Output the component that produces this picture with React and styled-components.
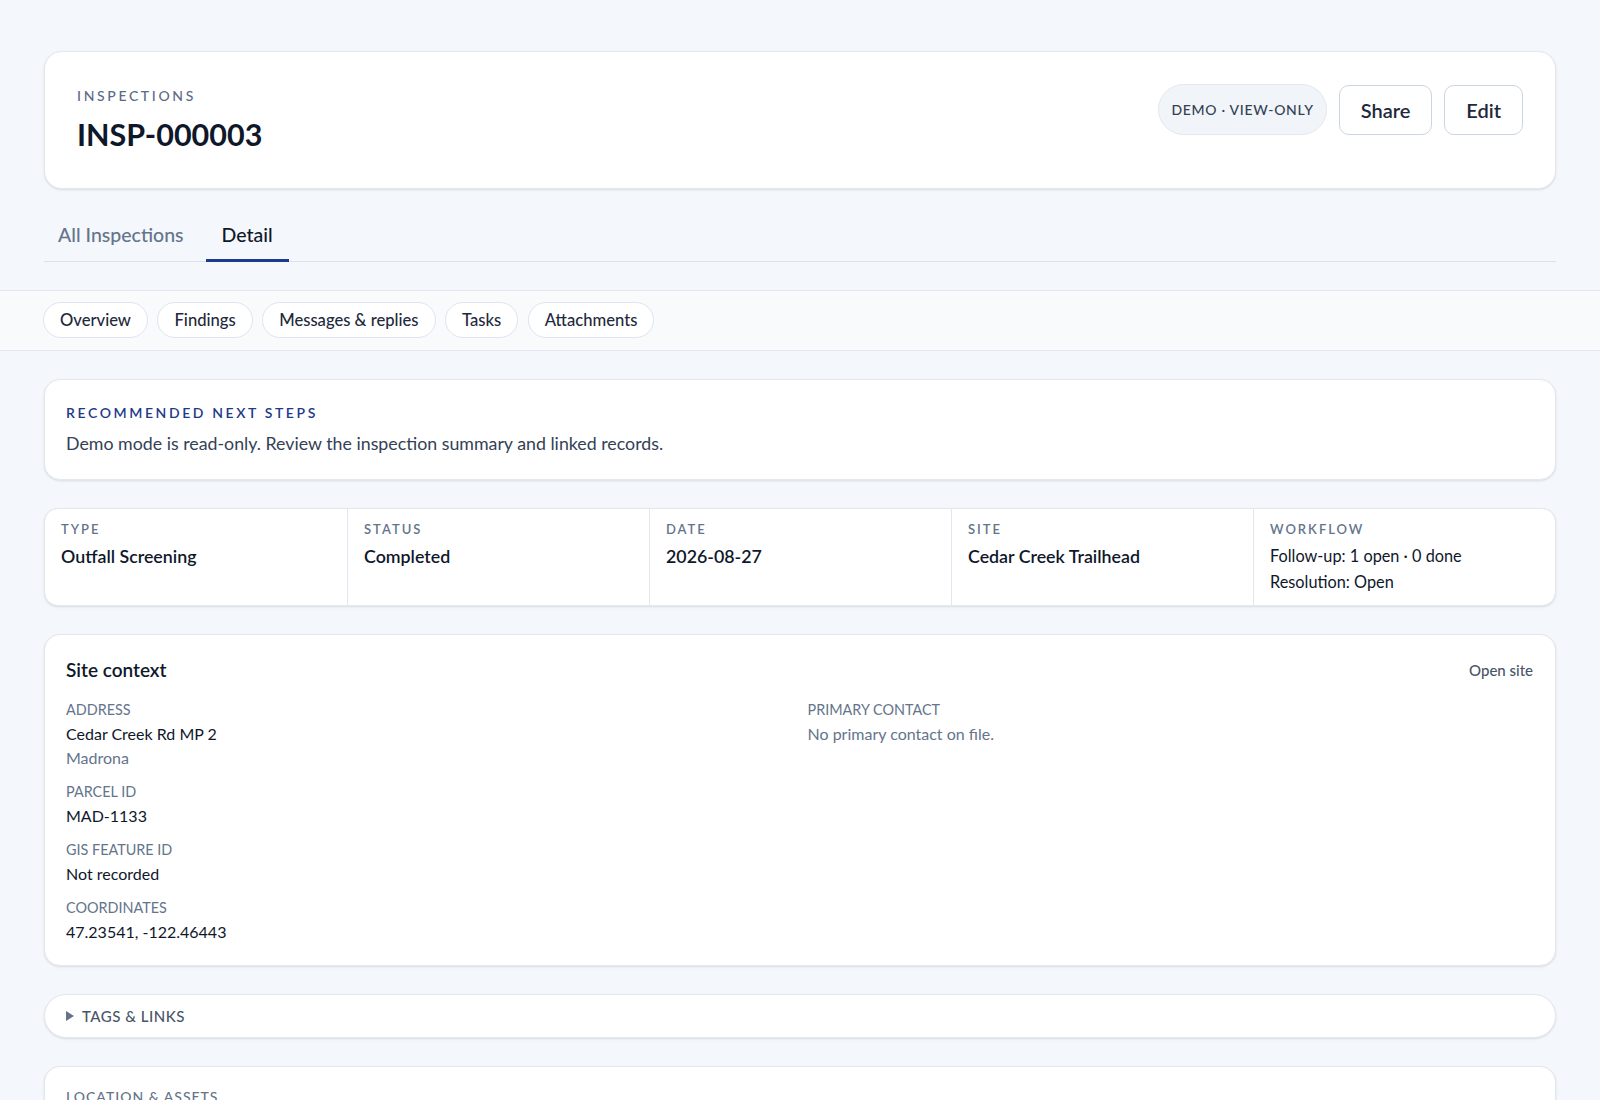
import React from "react";
import styled, { createGlobalStyle } from "styled-components";

const FONT = `"Segoe UI", Lato, "Noto Sans", sans-serif`;

const Global = createGlobalStyle`
  * { box-sizing: border-box; }
  body {
    margin: 0;
    background: #f4f7fb;
    font-family: ${FONT};
    color: #0f172a;
  }
`;

const Page = styled.div`
  min-height: 1100px;
  padding-top: 51px;
`;

const Section = styled.div`
  padding: 0 44px;
`;

const Card = styled.div`
  background: #ffffff;
  border: 1px solid #e3e8ef;
  border-radius: ${(p) => p.$radius || 16}px;
  box-shadow: 0 1px 3px rgba(15, 23, 42, 0.08), 0 1px 2px rgba(15, 23, 42, 0.04);
`;

const HeaderCard = styled(Card)`
  display: flex;
  justify-content: space-between;
  align-items: flex-start;
  padding: 32px 32px 34px;
`;

const TitleBlock = styled.div`
  padding-top: 2px;
`;

const Eyebrow = styled.div`
  font-size: 14px;
  line-height: 20px;
  letter-spacing: 2.65px;
  font-weight: 500;
  color: #5b6b84;
  text-transform: uppercase;
`;

const Title = styled.h1`
  margin: 8px 0 0;
  font-size: 30.5px;
  line-height: 40px;
  font-weight: 700;
  color: #0f172a;
`;

const Actions = styled.div`
  display: flex;
  gap: 12px;
  align-items: center;
`;

const DemoPill = styled.div`
  height: 51px;
  padding: 0 12px;
  display: flex;
  align-items: center;
  border-radius: 999px;
  background: #f1f5f9;
  border: 1px solid #e2e8f0;
  font-size: 14px;
  letter-spacing: 0.7px;
  font-weight: 500;
  color: #334155;
`;

const Button = styled.button`
  height: 50px;
  padding: 0 21px;
  border-radius: 10px;
  border: 1px solid #cbd5e1;
  background: #ffffff;
  font-family: ${FONT};
  font-size: 20px;
  font-weight: 600;
  color: #1e293b;
  cursor: pointer;
`;

const TabBar = styled.div`
  margin-top: 19px;
  display: flex;
  gap: 6px;
  border-bottom: 1px solid #dbe2ea;
`;

const Tab = styled.div`
  padding: 14px 16px 11px;
  font-size: 19.5px;
  line-height: 26px;
  font-weight: 500;
  color: ${(p) => (p.$active ? "#0f172a" : "#64748b")};
  margin-bottom: -1px;
  border-bottom: 3px solid ${(p) => (p.$active ? "#1e3a8a" : "transparent")};
  &:first-child {
    margin-left: -2px;
  }
`;

const SubNav = styled.nav`
  margin-top: 28px;
  background: #f8fafc;
  border-top: 1px solid #e2e8f0;
  border-bottom: 1px solid #e2e8f0;
  padding: 11px 44px 12px 43px;
  display: flex;
  gap: 9.5px;
`;

const Pill = styled.div`
  height: 36px;
  padding: 0 16px;
  display: flex;
  align-items: center;
  border-radius: 999px;
  background: #ffffff;
  border: 1px solid #dfe5ec;
  font-size: 16.6px;
  font-weight: 500;
  color: #1e293b;
`;

const Content = styled.div`
  padding: 28px 44px 0;
  display: flex;
  flex-direction: column;
  gap: 28px;
`;

const CalloutCard = styled(Card)`
  padding: 24px 21px;
`;

const CalloutLabel = styled.div`
  font-size: 14px;
  line-height: 18px;
  letter-spacing: 2.6px;
  font-weight: 600;
  color: #1e3a8a;
  text-transform: uppercase;
`;

const CalloutText = styled.div`
  margin-top: 9px;
  font-size: 17.8px;
  line-height: 24px;
  color: #334155;
`;

const StatsCard = styled(Card)`
  display: grid;
  grid-template-columns: repeat(5, 1fr);
  overflow: hidden;
`;

const StatCell = styled.div`
  padding: 11px 16px 10px;
  border-left: ${(p) => (p.$first ? "none" : "1px solid #e2e8f0")};
`;

const StatLabel = styled.div`
  font-size: 13px;
  line-height: 18px;
  letter-spacing: 2px;
  font-weight: 600;
  color: #64748b;
  text-transform: uppercase;
`;

const StatValue = styled.div`
  margin-top: ${(p) => (p.$tight ? 0 : 5)}px;
  line-height: 26px;
  font-weight: ${(p) => (p.$regular ? 400 : 600)};
  font-size: ${(p) => (p.$regular ? 16.3 : 17.8)}px;
  color: #0f172a;
`;

const SiteCard = styled(Card)`
  padding: 22px 22px 21px 21px;
`;

const CardHead = styled.div`
  display: flex;
  justify-content: space-between;
  align-items: center;
`;

const CardTitle = styled.h2`
  margin: 0;
  font-size: 19px;
  line-height: 26px;
  font-weight: 600;
  color: #0f172a;
`;

const LinkText = styled.a`
  font-size: 15px;
  font-weight: 500;
  color: #475569;
  text-decoration: none;
`;

const FieldGrid = styled.div`
  margin-top: 15px;
  display: grid;
  grid-template-columns: 1fr 1fr;
  column-gap: 16px;
`;

const FieldColumn = styled.div`
  display: flex;
  flex-direction: column;
  gap: 10px;
`;

const Field = styled.div`
  display: flex;
  flex-direction: column;
`;

const FieldLabel = styled.div`
  font-size: 14.4px;
  line-height: 24px;
  color: #64748b;
  text-transform: uppercase;
`;

const FieldValue = styled.div`
  font-size: 16px;
  line-height: 24px;
  color: ${(p) => (p.$muted ? "#64748b" : "#0f172a")};
`;

const Disclosure = styled(Card)`
  border-radius: 22px;
  height: 44px;
  padding: 0 21px;
  display: flex;
  align-items: center;
  gap: 8px;
  font-size: 15px;
  font-weight: 500;
  letter-spacing: 0.5px;
  color: #475569;
  text-transform: uppercase;
`;

const Caret = styled.span`
  width: 0;
  height: 0;
  border-top: 5px solid transparent;
  border-bottom: 5px solid transparent;
  border-left: 8px solid #64748b;
`;

const SectionCard = styled(Card)`
  padding: 20px 21px;
  min-height: 120px;
`;

const SectionLabel = styled.div`
  font-size: 14px;
  line-height: 20px;
  letter-spacing: 1px;
  font-weight: 500;
  color: #64748b;
  text-transform: uppercase;
`;

const stats = [
  { label: "Type", value: "Outfall Screening" },
  { label: "Status", value: "Completed" },
  { label: "Date", value: "2026-08-27" },
  { label: "Site", value: "Cedar Creek Trailhead" },
];

export default function App() {
  return (
    <>
      <Global />
      <Page>
        <Section>
          <HeaderCard $radius={18}>
            <TitleBlock>
              <Eyebrow>Inspections</Eyebrow>
              <Title>INSP-000003</Title>
            </TitleBlock>
            <Actions>
              <DemoPill>DEMO · VIEW-ONLY</DemoPill>
              <Button>Share</Button>
              <Button>Edit</Button>
            </Actions>
          </HeaderCard>
          <TabBar>
            <Tab>All Inspections</Tab>
            <Tab $active>Detail</Tab>
          </TabBar>
        </Section>
        <SubNav>
          <Pill>Overview</Pill>
          <Pill>Findings</Pill>
          <Pill>Messages &amp; replies</Pill>
          <Pill>Tasks</Pill>
          <Pill>Attachments</Pill>
        </SubNav>
        <Content>
          <CalloutCard>
            <CalloutLabel>Recommended next steps</CalloutLabel>
            <CalloutText>
              Demo mode is read-only. Review the inspection summary and linked records.
            </CalloutText>
          </CalloutCard>

          <StatsCard $radius={14}>
            {stats.map((s, i) => (
              <StatCell key={s.label} $first={i === 0}>
                <StatLabel>{s.label}</StatLabel>
                <StatValue>{s.value}</StatValue>
              </StatCell>
            ))}
            <StatCell>
              <StatLabel>Workflow</StatLabel>
              <StatValue $regular>Follow-up: 1 open · 0 done</StatValue>
              <StatValue $regular $tight>Resolution: Open</StatValue>
            </StatCell>
          </StatsCard>

          <SiteCard>
            <CardHead>
              <CardTitle>Site context</CardTitle>
              <LinkText href="#">Open site</LinkText>
            </CardHead>
            <FieldGrid>
              <FieldColumn>
                <Field>
                  <FieldLabel>Address</FieldLabel>
                  <FieldValue>Cedar Creek Rd MP 2</FieldValue>
                  <FieldValue $muted>Madrona</FieldValue>
                </Field>
                <Field>
                  <FieldLabel>Parcel ID</FieldLabel>
                  <FieldValue>MAD-1133</FieldValue>
                </Field>
                <Field>
                  <FieldLabel>GIS feature ID</FieldLabel>
                  <FieldValue>Not recorded</FieldValue>
                </Field>
                <Field>
                  <FieldLabel>Coordinates</FieldLabel>
                  <FieldValue>47.23541, -122.46443</FieldValue>
                </Field>
              </FieldColumn>
              <FieldColumn>
                <Field>
                  <FieldLabel>Primary contact</FieldLabel>
                  <FieldValue $muted>No primary contact on file.</FieldValue>
                </Field>
              </FieldColumn>
            </FieldGrid>
          </SiteCard>

          <Disclosure>
            <Caret />
            Tags &amp; links
          </Disclosure>

          <SectionCard>
            <SectionLabel>Location &amp; assets</SectionLabel>
          </SectionCard>
        </Content>
      </Page>
    </>
  );
}
